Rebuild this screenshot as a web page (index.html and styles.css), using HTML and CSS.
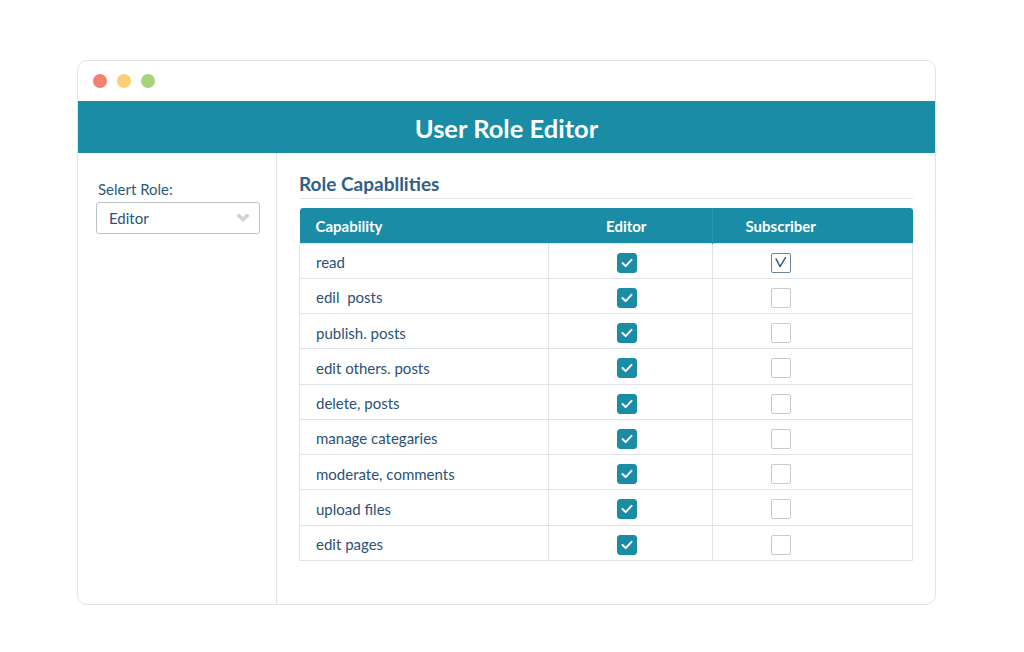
FILE: index.html
```html
<!DOCTYPE html>
<html lang="en">
<head>
    <meta charset="UTF-8">
    <meta name="viewport" content="width=device-width, initial-scale=1.0">
    <title>User Role Editor</title>
    <link rel="stylesheet" href="styles.css">
</head>
<body>
    <div class="window">
        <div class="titlebar">
            <span class="dot dot-red"></span>
            <span class="dot dot-yellow"></span>
            <span class="dot dot-green"></span>
        </div>
        <header class="app-header">
            <h1>User Role Editor</h1>
        </header>
        <div class="app-body">
            <aside class="sidebar">
                <label for="roleSelect" class="role-label">Selert Role:</label>
                <div class="select-box" id="roleSelect">
                    <span>Editor</span>
                    <svg class="chevron" width="14" height="10" viewBox="0 0 14 10">
                        <path d="M0.5 3 Q1 0.5 3.5 1 L7 4 L10.5 1 Q13 0.5 13.5 3 L7 9 Z" fill="#cdd3d8"/>
                    </svg>
                </div>
            </aside>
            <main class="content">
                <h2 class="section-title">Role Capabllities</h2>
                <table class="caps">
                    <colgroup>
                        <col class="col-cap">
                        <col class="col-editor">
                        <col class="col-sub">
                    </colgroup>
                    <thead>
                        <tr>
                            <th class="cap-name">Capability</th>
                            <th class="editor-cell">Editor</th>
                            <th class="sub-cell">Subscriber</th>
                        </tr>
                    </thead>
                    <tbody>
                        <tr>
                            <td class="cap-name">read</td>
                            <td class="editor-cell"><span class="box checked"><svg viewBox="0 0 20 20"><polyline points="5,10 8.5,13.5 15,6.5"/></svg></span></td>
                            <td class="sub-cell"><span class="box outline"><svg viewBox="0 0 20 20"><polyline points="4.5,5.5 9,14 15,4"/></svg></span></td>
                        </tr>
                        <tr>
                            <td class="cap-name">edil&nbsp; posts</td>
                            <td class="editor-cell"><span class="box checked"><svg viewBox="0 0 20 20"><polyline points="5,10 8.5,13.5 15,6.5"/></svg></span></td>
                            <td class="sub-cell"><span class="box"></span></td>
                        </tr>
                        <tr>
                            <td class="cap-name">publish. posts</td>
                            <td class="editor-cell"><span class="box checked"><svg viewBox="0 0 20 20"><polyline points="5,10 8.5,13.5 15,6.5"/></svg></span></td>
                            <td class="sub-cell"><span class="box"></span></td>
                        </tr>
                        <tr>
                            <td class="cap-name">edit others. posts</td>
                            <td class="editor-cell"><span class="box checked"><svg viewBox="0 0 20 20"><polyline points="5,10 8.5,13.5 15,6.5"/></svg></span></td>
                            <td class="sub-cell"><span class="box"></span></td>
                        </tr>
                        <tr>
                            <td class="cap-name">delete, posts</td>
                            <td class="editor-cell"><span class="box checked"><svg viewBox="0 0 20 20"><polyline points="5,10 8.5,13.5 15,6.5"/></svg></span></td>
                            <td class="sub-cell"><span class="box"></span></td>
                        </tr>
                        <tr>
                            <td class="cap-name">manage categaries</td>
                            <td class="editor-cell"><span class="box checked"><svg viewBox="0 0 20 20"><polyline points="5,10 8.5,13.5 15,6.5"/></svg></span></td>
                            <td class="sub-cell"><span class="box"></span></td>
                        </tr>
                        <tr>
                            <td class="cap-name">moderate, comments</td>
                            <td class="editor-cell"><span class="box checked"><svg viewBox="0 0 20 20"><polyline points="5,10 8.5,13.5 15,6.5"/></svg></span></td>
                            <td class="sub-cell"><span class="box"></span></td>
                        </tr>
                        <tr>
                            <td class="cap-name">upload files</td>
                            <td class="editor-cell"><span class="box checked"><svg viewBox="0 0 20 20"><polyline points="5,10 8.5,13.5 15,6.5"/></svg></span></td>
                            <td class="sub-cell"><span class="box"></span></td>
                        </tr>
                        <tr>
                            <td class="cap-name">edit pages</td>
                            <td class="editor-cell"><span class="box checked"><svg viewBox="0 0 20 20"><polyline points="5,10 8.5,13.5 15,6.5"/></svg></span></td>
                            <td class="sub-cell"><span class="box"></span></td>
                        </tr>
                    </tbody>
                </table>
            </main>
        </div>
    </div>
</body>
</html>
```

FILE: styles.css
```css
*{
    box-sizing: border-box;
}
body{
    margin: 0;
    padding: 60px 0 0 77px;
    background: #ffffff;
    font-family: Lato, "Open Sans", "Liberation Sans", sans-serif;
    color: #2b5276;
}
.window{
    width: 859px;
    height: 545px;
    border: 1px solid #dfe4e8;
    border-radius: 10px;
    display: flex;
    flex-direction: column;
    overflow: hidden;
    background: #fff;
}
.titlebar{
    height: 40px;
    display: flex;
    gap: 10px;
    padding: 13px 0 0 15px;
}
.dot{
    width: 14px;
    height: 14px;
    border-radius: 50%;
}
.dot-red{ background: #f2816f; }
.dot-yellow{ background: #fccf78; }
.dot-green{ background: #a9d37b; }

.app-header{
    height: 52px;
    background: #1a8ca6;
    display: flex;
    align-items: center;
    justify-content: center;
    padding-top: 2px;
}
.app-header h1{
    margin: 0;
    color: #fff;
    font-size: 25.5px;
    font-weight: 700;
}

.app-body{
    flex: 1;
    display: flex;
}
.sidebar{
    width: 200px;
    border-right: 1px solid #dfe4e8;
    padding: 27px 0 0 18px;
}
.role-label{
    display: block;
    font-size: 15px;
    padding-left: 2px;
    margin-bottom: 4px;
    color: #2d5a7d;
}
.select-box{
    width: 164px;
    height: 32px;
    border: 1px solid #b9c3cb;
    border-radius: 3px;
    display: flex;
    align-items: center;
    justify-content: space-between;
    padding: 0 9px 0 12px;
    font-size: 15px;
    color: #2b5276;
}

.content{
    flex: 1;
    padding: 20px 22px 0 22px;
}
.section-title{
    margin: 0;
    font-size: 19px;
    font-weight: 700;
    line-height: 22px;
    color: #2f6087;
    padding-bottom: 3px;
    border-bottom: 1px solid #dfe4e8;
}
.caps{
    margin-top: 9px;
    width: 613px;
    border-collapse: collapse;
    table-layout: fixed;
    font-size: 15px;
}
.col-cap{ width: 249px; }
.col-editor{ width: 164px; }
.col-sub{ width: 200px; }
.caps thead tr{
    background: #1a8ca6;
    color: #fff;
    height: 35px;
}
.caps th{
    font-weight: 700;
    font-size: 15px;
    text-align: center;
    padding: 2px 0 0 0;
}
.caps th:first-child{ border-top-left-radius: 3px; }
.caps th:last-child{ border-top-right-radius: 3px; }
.caps th.sub-cell{
    border-left: 1px solid #2497b0;
}
.caps th.cap-name, .caps td.cap-name{
    text-align: left;
    padding-left: 16px;
}
.caps tbody tr{
    height: 35.25px;
}
.caps td{
    border: 1px solid #dfe4e8;
    text-align: center;
    padding: 3px 0 0 0;
    vertical-align: middle;
    color: #2b5276;
}
.caps td.editor-cell, .caps th.editor-cell{
    padding-right: 8px;
}
.caps td.sub-cell, .caps th.sub-cell{
    padding-right: 64px;
}
.box{
    display: inline-block;
    vertical-align: middle;
    width: 20px;
    height: 20px;
    border: 1px solid #c3cad1;
    border-radius: 2px;
    background: #fff;
}
.box svg{
    display: block;
    width: 100%;
    height: 100%;
    fill: none;
    stroke-linecap: round;
    stroke-linejoin: round;
}
.box.checked{
    background: #1a8ca6;
    border-color: #1a8ca6;
    border-radius: 3px;
}
.box.checked svg{
    stroke: #fff;
    stroke-width: 2.2;
}
.box.outline{
    border-color: #6a8499;
}
.box.outline svg{
    stroke: #2f5c80;
    stroke-width: 1.6;
}
```
